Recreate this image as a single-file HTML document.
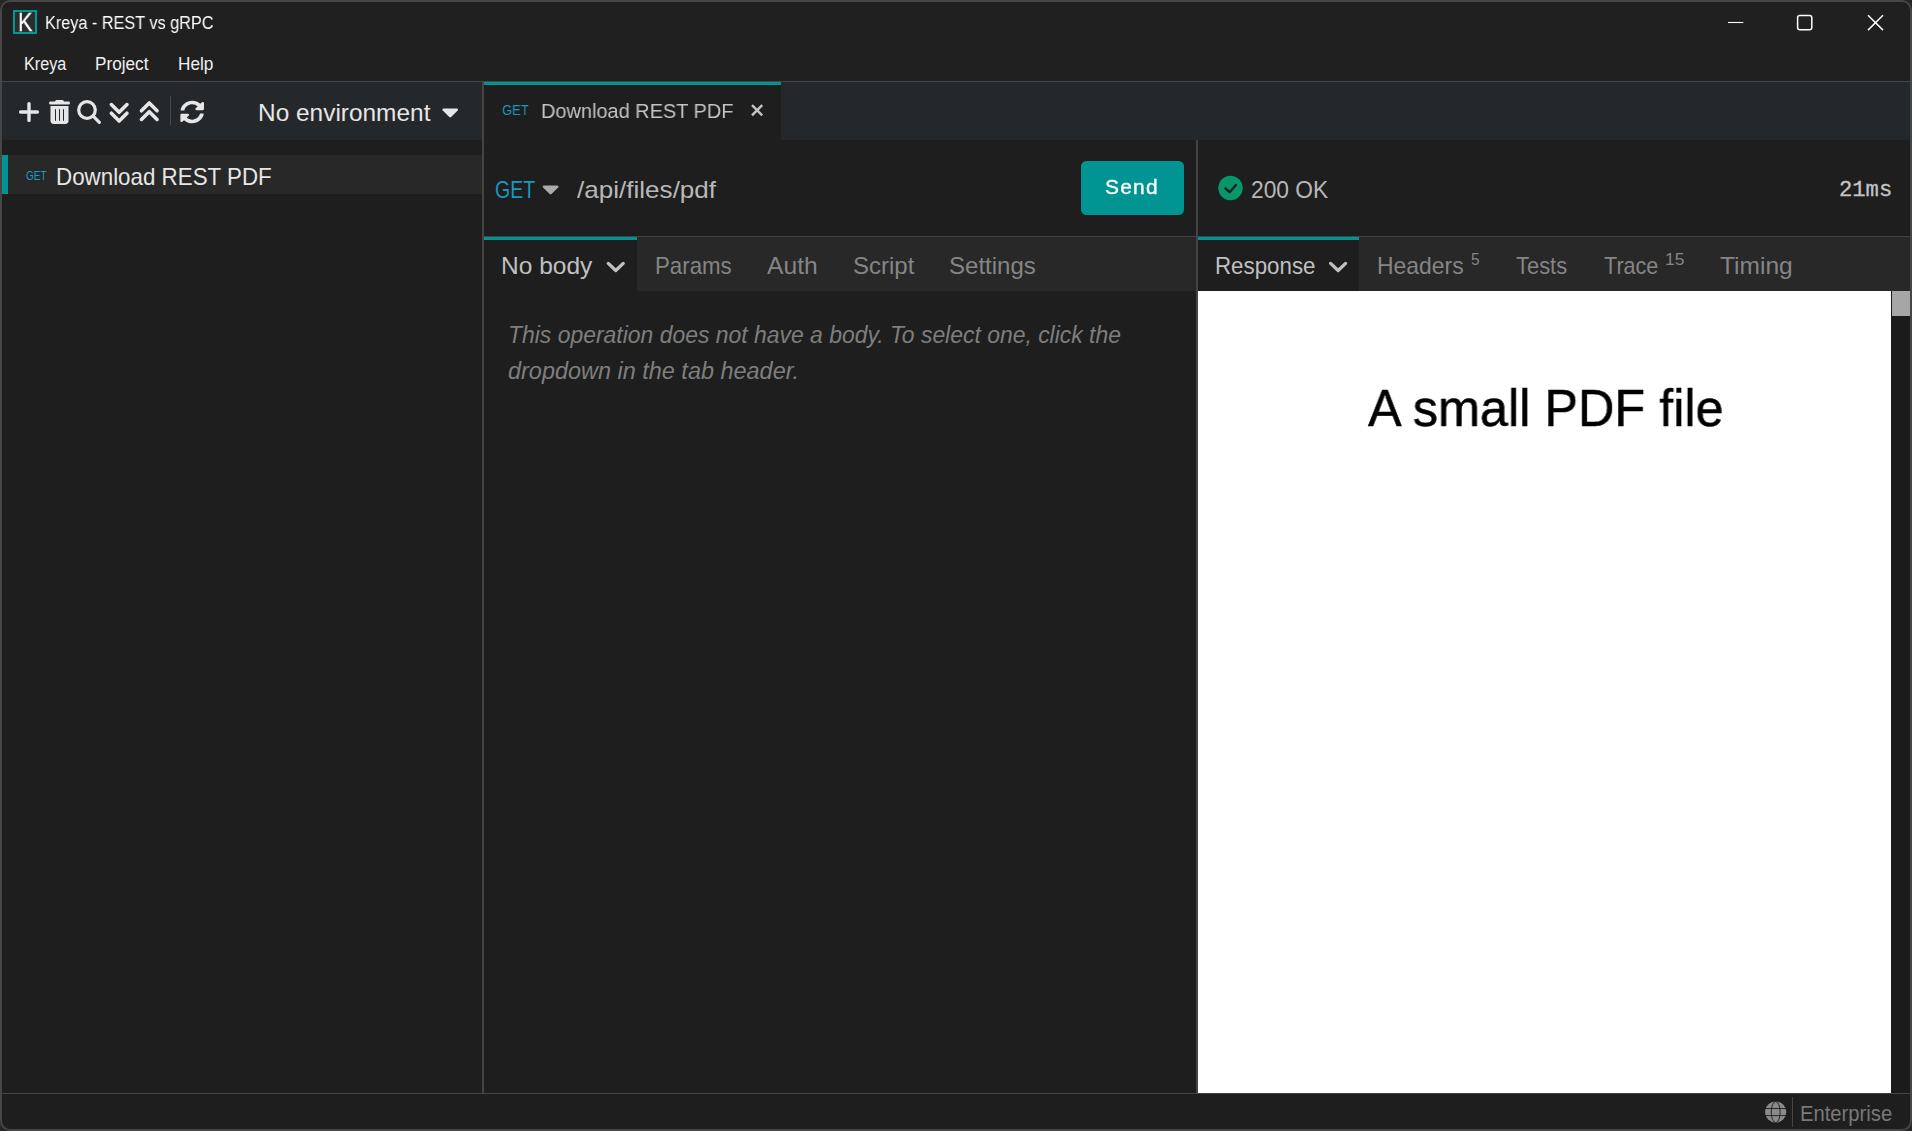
<!DOCTYPE html>
<html lang="en">
<head>
<meta charset="utf-8">
<title>Kreya - REST vs gRPC</title>
<style>
html,body{margin:0;padding:0;}
body{width:1912px;height:1131px;overflow:hidden;background:#262626;font-family:"Liberation Sans",sans-serif;position:relative;}
.r{position:absolute;}
.t{position:absolute;white-space:nowrap;line-height:normal;transform-origin:0 0;}
svg{position:absolute;overflow:visible;}
#win{position:absolute;left:0;top:0;width:1912px;height:1131px;box-sizing:border-box;border-radius:10px;background:#1e1e1e;overflow:hidden;}
#frame{position:absolute;left:0;top:0;width:1912px;height:1131px;box-sizing:border-box;border:2px solid #464646;border-radius:10px;}
</style>
</head>
<body>
<div id="win">
<!-- title + menu -->
<div class="r" style="left:0;top:0;width:1912px;height:81px;background:#202020"></div>
<div class="r" style="left:0;top:81px;width:1912px;height:1px;background:#444"></div>
<!-- logo -->
<div class="r" style="left:13px;top:10px;width:24px;height:24px;box-sizing:border-box;border:2px solid #009a96;background:#2d2d2d"></div>
<!-- window controls -->
<svg style="left:1720px;top:8px" width="180" height="30" viewBox="1720 8 180 30" fill="none" stroke="#fff" stroke-width="1.5">
<path d="M1728 22.5H1743.3" stroke-width="1.1"/>
<rect x="1797.6" y="15.6" width="14.2" height="14.2" rx="2.2"/>
<path d="M1868 15.3L1883 30.1M1883 15.3L1868 30.1"/>
</svg>
<!-- sidebar toolbar -->
<div class="r" style="left:0;top:82px;width:482px;height:58px;background:#25282b"></div>
<svg style="left:0;top:82px" width="482" height="58" viewBox="0 82 482 58">
<g fill="none" stroke="#e6e6e6" stroke-linecap="round" stroke-linejoin="round">
<path d="M29 103.6V120.4M20.6 112H37.4" stroke-width="3.4"/>
<circle cx="87" cy="110" r="8.3" stroke-width="3.2"/>
<path d="M93.2 116.2L99.3 122.3" stroke-width="3.2"/>
<path d="M111.35 104.55L119.15 112.35L126.95 104.55M111.35 113.25L119.15 121.05L126.95 113.25" stroke-width="3.6"/>
<path d="M141.45 110.75L149.25 102.95L157.05 110.75M141.45 119.45L149.25 111.65L157.05 119.45" stroke-width="3.6"/>
</g>
<!-- trash -->
<g fill="#e6e6e6" transform="translate(49 100) scale(0.046875)">
<path d="M135.200 17.700C140.600 6.800 151.700 0 163.800 0H284.200c12.100 0 23.200 6.800 28.600 17.700L320 32h96c17.700 0 32 14.300 32 32s-14.300 32-32 32H32C14.300 96 0 81.700 0 64S14.300 32 32 32h96l7.200-14.300zM32 128H416V448c0 35.300-28.700 64-64 64H96c-35.300 0-64-28.700-64-64V128zm106.700 64c-6.100 0-11 4.900-11 11V437c0 6.100 4.900 11 11 11s11-4.900 11-11V203c0-6.100-4.900-11-11-11zm85.300 0c-6.100 0-11 4.900-11 11V437c0 6.100 4.900 11 11 11s11-4.900 11-11V203c0-6.100-4.900-11-11-11zm85.300 0c-6.100 0-11 4.900-11 11V437c0 6.100 4.900 11 11 11s11-4.900 11-11V203c0-6.100-4.900-11-11-11z"/>
</g>
<!-- refresh -->
<g fill="#e6e6e6" transform="translate(180 100.35) scale(0.0476 0.0455)">
<path d="M370.720 133.280C339.458 104.008 298.888 87.962 255.848 88c-77.458.068-144.328 53.178-162.791 126.850-1.344 5.363-6.122 9.150-11.651 9.150H24.103c-7.498 0-13.194-6.807-11.807-14.176C33.933 94.924 134.813 8 256 8c66.448 0 126.791 26.136 171.315 68.685L463.030 40.970C478.149 25.851 504 36.559 504 57.941V192c0 13.255-10.745 24-24 24H345.941c-21.382 0-32.090-25.851-16.971-40.971l41.750-41.749zM32 296h134.059c21.382 0 32.090 25.851 16.971 40.971l-41.750 41.750c31.262 29.273 71.835 45.319 114.876 45.280 77.418-.070 144.315-53.144 162.787-126.849 1.344-5.363 6.122-9.150 11.651-9.150h57.304c7.498 0 13.194 6.807 11.807 14.176C478.067 417.076 377.187 504 256 504c-66.448 0-126.791-26.136-171.315-68.685L48.970 471.030C33.851 486.149 8 475.441 8 454.059V320c0-13.255 10.745-24 24-24z"/>
</g>
<rect x="170" y="96" width="1" height="29" fill="#4a4a4a"/>
<!-- env caret -->
<path d="M443.600 108.500h13.200c1.100 0 1.700 1.300 .9 2.100l-6.600 6.300c-.5 .5-1.300 .5-1.800 0l-6.600-6.300c-.8-.8-.2-2.100 .9-2.100z" fill="#e6e6e6"/>
</svg>
<!-- selected item -->
<div class="r" style="left:0;top:155px;width:482px;height:39px;background:#282828"></div>
<div class="r" style="left:2px;top:155px;width:6px;height:39px;background:#009592"></div>
<!-- sidebar divider -->
<div class="r" style="left:482px;top:82px;width:2px;height:1011px;background:#444"></div>
<!-- tab bar -->
<div class="r" style="left:484px;top:82px;width:1428px;height:58px;background:#25282b"></div>
<div class="r" style="left:484px;top:82px;width:297px;height:58px;background:#1e1e1e"></div>
<div class="r" style="left:484px;top:82px;width:297px;height:3px;background:#009592"></div>
<svg style="left:750px;top:103px" width="14" height="14" viewBox="750 103 14 14" fill="none" stroke="#c4c4c4" stroke-width="2.4">
<path d="M752 105.200L762.200 115.400M762.200 105.200L752 115.400"/>
</svg>
<!-- request/response divider -->
<div class="r" style="left:1196px;top:140px;width:2px;height:953px;background:#444"></div>
<!-- line under url row -->
<div class="r" style="left:484px;top:236px;width:1428px;height:1px;background:#444"></div>
<!-- tab strips -->
<div class="r" style="left:484px;top:237px;width:712px;height:54px;background:#282828"></div>
<div class="r" style="left:1198px;top:237px;width:714px;height:54px;background:#282828"></div>
<div class="r" style="left:484px;top:237px;width:153px;height:54px;background:#1e1e1e"></div>
<div class="r" style="left:484px;top:237px;width:153px;height:3px;background:#009592"></div>
<div class="r" style="left:1198px;top:237px;width:161px;height:54px;background:#1e1e1e"></div>
<div class="r" style="left:1198px;top:237px;width:161px;height:3px;background:#009592"></div>
<svg style="left:484px;top:140px" width="1428" height="160" viewBox="484 140 1428 160">
<path d="M543.900 185.500h13.400c1.100 0 1.700 1.300 .9 2.100l-6.700 6.400c-.5 .5-1.300 .5-1.800 0l-6.700-6.400c-.8-.8-.2-2.100 .9-2.100z" fill="#aaa"/>
<g fill="none" stroke="#c0c0c0" stroke-width="3.3" stroke-linecap="round" stroke-linejoin="round">
<path d="M608.300 263.4L615.750 270.500L623.200 263.4"/>
<path d="M1330.600 263.4L1338.100 270.500L1345.600 263.4"/>
</g>
<circle cx="1230.500" cy="188" r="12.200" fill="#059669"/>
<path d="M1225.400 188.300L1229.600 192.200L1236 185" fill="none" stroke="#1e1e1e" stroke-width="2.300" stroke-linecap="round" stroke-linejoin="round"/>
</svg>
<!-- send -->
<div class="r" style="left:1081px;top:161px;width:103px;height:54px;border-radius:5.5px;background:#009592"></div>
<!-- pdf -->
<div class="r" style="left:1198px;top:291px;width:693px;height:802px;background:#fff"></div>
<div class="r" style="left:1891px;top:291px;width:21px;height:802px;background:#1b1b1b"></div>
<div class="r" style="left:1892px;top:291px;width:18px;height:25px;background:#a6a6a6"></div>
<!-- status bar -->
<div class="r" style="left:0;top:1093px;width:1912px;height:1px;background:#444"></div>
<div class="r" style="left:1792px;top:1097px;width:1px;height:30px;background:#444"></div>
<svg style="left:1764px;top:1100px" width="24" height="24" viewBox="1764 1100 24 24">
<circle cx="1775.700" cy="1112.100" r="10.600" fill="#8a8a8a"/>
<g fill="none" stroke="#1e1e1e" stroke-width="0.900">
<path d="M1764 1108.500H1788M1764 1115.600H1788"/>
<ellipse cx="1775.700" cy="1112.100" rx="4.400" ry="10.600"/>
</g>
</svg>
<div class="t" style="left:45.20px;top:13.00px;font-size:18px;color:#fff;transform:scaleX(0.9022);will-change:transform;">Kreya - REST vs gRPC</div>
<div class="t" style="left:24.48px;top:54.40px;font-size:17.5px;color:#f0f0f0;transform:scaleX(0.9244);">Kreya</div>
<div class="t" style="left:95.02px;top:54.40px;font-size:17.5px;color:#f0f0f0;transform:scaleX(0.9815);">Project</div>
<div class="t" style="left:177.62px;top:54.40px;font-size:17.5px;color:#f0f0f0;transform:scaleX(0.9829);">Help</div>
<div class="t" style="left:258.15px;top:99.80px;font-size:23.2px;color:#e6e6e6;transform:scaleX(1.0534);">No environment</div>
<div class="t" style="left:26.00px;top:168.60px;font-size:12.4px;color:#1a9cc2;transform:scaleX(0.8077);">GET</div>
<div class="t" style="left:56.04px;top:163.70px;font-size:23.2px;color:#e6e6e6;transform:scaleX(0.9640);">Download REST PDF</div>
<div class="t" style="left:501.80px;top:101.50px;font-size:14.8px;color:#1a9cc2;transform:scaleX(0.8742);will-change:transform;">GET</div>
<div class="t" style="left:541.33px;top:98.80px;font-size:20.5px;color:#c4c4c4;transform:scaleX(0.9730);will-change:transform;">Download REST PDF</div>
<div class="t" style="left:495.36px;top:177.00px;font-size:23.2px;color:#1a98bd;transform:scaleX(0.8426);">GET</div>
<div class="t" style="left:576.60px;top:177.00px;font-size:23.2px;color:#b8b8b8;transform:scaleX(1.1242);">/api/files/pdf</div>
<div class="t" style="left:1105.08px;top:175.40px;font-size:20.6px;color:#fff;transform:scaleX(1.0180);letter-spacing:1.2px;-webkit-text-stroke:0.35px #fff;will-change:transform;">Send</div>
<div class="t" style="left:501.44px;top:253.00px;font-size:23.2px;color:#c0c0c0;transform:scaleX(1.0570);">No body</div>
<div class="t" style="left:654.54px;top:253.00px;font-size:23.2px;color:#858585;transform:scaleX(0.9603);">Params</div>
<div class="t" style="left:767.00px;top:253.00px;font-size:23.2px;color:#858585;transform:scaleX(1.0638);">Auth</div>
<div class="t" style="left:852.97px;top:253.00px;font-size:23.2px;color:#858585;transform:scaleX(1.0345);">Script</div>
<div class="t" style="left:948.96px;top:253.00px;font-size:23.2px;color:#858585;transform:scaleX(1.0366);">Settings</div>
<div class="t" style="left:1251.32px;top:176.90px;font-size:23.2px;color:#b8b8b8;transform:scaleX(0.9821);">200 OK</div>
<div class="t" style="left:1839.19px;top:178.30px;font-size:22px;color:#c4c4c4;transform:scaleX(1.0080);font-family:'Liberation Mono', monospace;-webkit-text-stroke:0.3px #c4c4c4;">21ms</div>
<div class="t" style="left:1215.44px;top:253.00px;font-size:23.2px;color:#c0c0c0;transform:scaleX(0.9621);">Response</div>
<div class="t" style="left:1377.31px;top:253.00px;font-size:23.2px;color:#858585;transform:scaleX(0.9884);">Headers</div>
<div class="t" style="left:1470.76px;top:249.50px;font-size:16.5px;color:#858585;transform:scaleX(0.9375);">5</div>
<div class="t" style="left:1516.00px;top:253.00px;font-size:23.2px;color:#858585;transform:scaleX(0.9444);">Tests</div>
<div class="t" style="left:1604.00px;top:253.00px;font-size:23.2px;color:#858585;transform:scaleX(0.9310);">Trace</div>
<div class="t" style="left:1664.94px;top:249.50px;font-size:16.5px;color:#858585;transform:scaleX(1.0588);">15</div>
<div class="t" style="left:1720.00px;top:253.00px;font-size:23.2px;color:#858585;transform:scaleX(1.0588);">Timing</div>
<div class="t" style="left:507.51px;top:321.80px;font-size:23px;color:#7e7e7e;transform:scaleX(0.9967);font-style:italic;">This operation does not have a body. To select one, click the</div>
<div class="t" style="left:508.30px;top:357.70px;font-size:23px;color:#7e7e7e;transform:scaleX(1.0194);font-style:italic;">dropdown in the tab header.</div>
<div class="t" style="left:1367.50px;top:377.50px;font-size:52.0px;color:#000;transform:scaleX(0.9690);-webkit-text-stroke:0.5px #000;will-change:transform;">A small PDF file</div>
<div class="t" style="left:1799.75px;top:1102.20px;font-size:21.2px;color:#787878;transform:scaleX(0.9547);">Enterprise</div>
<div class="t" style="left:17.77px;top:7.10px;font-size:26.6px;color:#fff;transform:scaleX(0.8133);will-change:transform;-webkit-text-stroke:0.3px #fff;">K</div>
</div>
<div id="frame"></div>
</body>
</html>
